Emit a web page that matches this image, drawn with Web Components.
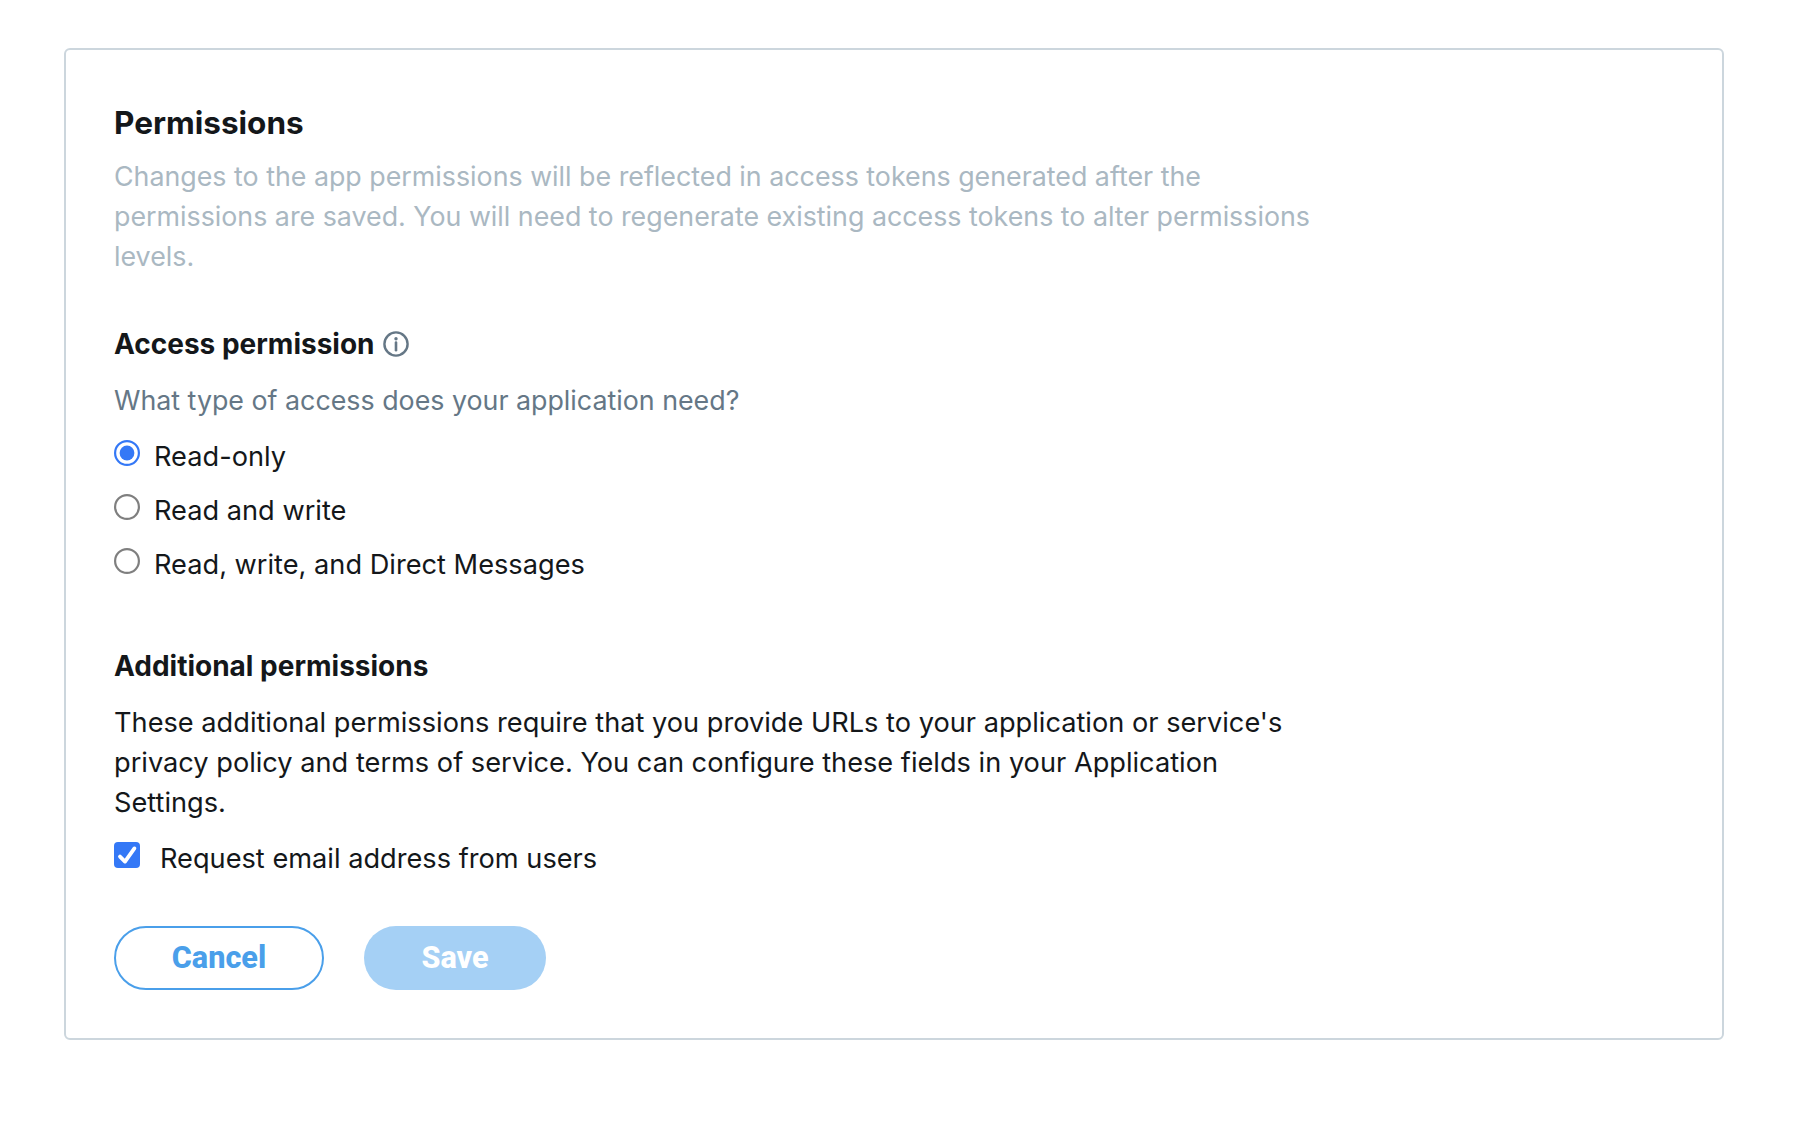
<!DOCTYPE html>
<html lang="en">
<head>
<meta charset="utf-8">
<title>Permissions</title>
<style>
  html, body { margin: 0; background: #fff; }
  body { font-family: Inter, "Liberation Sans", sans-serif; color: #14171a; }
</style>
</head>
<body>
<perm-page>
  <perm-card>
    <perm-heading slot="title" level="1">Permissions</perm-heading>
    <perm-text tone="muted" style="margin-top:13px">Changes to the app permissions will be reflected in access tokens generated after the permissions are saved. You will need to regenerate existing access tokens to alter permissions levels.</perm-text>

    <perm-heading level="2" info style="margin-top:48px">Access permission</perm-heading>
    <perm-text tone="grey" style="margin-top:16px">What type of access does your application need?</perm-text>
    <perm-radio checked style="margin-top:17px">Read-only</perm-radio>
    <perm-radio style="margin-top:14px">Read and write</perm-radio>
    <perm-radio style="margin-top:14px">Read, write, and Direct Messages</perm-radio>

    <perm-heading level="2" style="margin-top:61px">Additional permissions</perm-heading>
    <perm-text size="large" style="margin-top:17px">These additional permissions require that you provide URLs to your application or service's privacy policy and terms of service. You can configure these fields in your Application Settings.</perm-text>
    <perm-check checked style="margin-top:16px">Request email address from users</perm-check>

    <perm-actions>
      <perm-button variant="outline">Cancel</perm-button>
      <perm-button variant="disabled">Save</perm-button>
    </perm-actions>
  </perm-card>
</perm-page>

<script>
/** Small helper: shadow root from a markup string */
function shadow(el, html) {
    el.attachShadow({ mode: "open" }).innerHTML = html;
}

class PermPage extends HTMLElement {
    constructor() {
        super();
        shadow(this, `<style>
            :host { display: block; padding: 48px 74px 102px 64px; }
        </style><slot></slot>`);
    }
}

class PermCard extends HTMLElement {
    constructor() {
        super();
        shadow(this, `<style>
            :host {
                display: block;
                box-sizing: border-box;
                border: 2px solid #ccd6dd;
                border-radius: 6px;
                padding: 53px 48px 48px;
                background: #fff;
            }
            .body { max-width: 1200px; }
        </style>
        <div class="body"><slot name="title"></slot><slot></slot></div>`);
    }
}

class PermHeading extends HTMLElement {
    constructor() {
        super();
        const info = this.hasAttribute("info") ? `
            <svg viewBox="0 0 26 26" width="26" height="26" fill="none" stroke="#657786">
                <circle cx="13" cy="13" r="11.6" stroke-width="2.4"/>
                <path d="M13 11.6v7.6" stroke-width="2.6" stroke-linecap="round"/>
                <circle cx="13" cy="7.8" r="1.7" fill="#657786" stroke="none"/>
            </svg>` : "";
        shadow(this, `<style>
            :host { display: flex; align-items: center; gap: 8px; font-weight: 700; color: #14171a; line-height: 40px; }
            :host([level="1"]) { font-size: 31.5px; }
            :host([level="2"]) { font-size: 28px; }
        </style><slot></slot>${info}`);
    }
}

class PermText extends HTMLElement {
    constructor() {
        super();
        shadow(this, `<style>
            :host { display: block; font-size: 26.8px; line-height: 40px; color: #14171a; }
            :host([size="large"]) { font-size: 27.2px; }
            :host([tone="muted"]) { color: #aab8c2; }
            :host([tone="grey"]) { color: #657786; }
        </style><slot></slot>`);
    }
}

class PermRadio extends HTMLElement {
    constructor() {
        super();
        const on = this.hasAttribute("checked");
        shadow(this, `<style>
            :host { display: flex; align-items: center; gap: 14px; font-size: 27.2px; line-height: 40px; color: #14171a; }
            svg { flex: none; margin-top: -9px; }
        </style>
        <svg viewBox="0 0 26 26" width="26" height="26" fill="none">
            <circle cx="13" cy="13" r="11.9" stroke="${on ? "#3478f6" : "#7f7f7f"}" stroke-width="2.2" fill="#fff"/>
            ${on ? '<circle cx="13" cy="13" r="7.4" fill="#3478f6"/>' : ""}
        </svg><slot></slot>`);
    }
}

class PermCheck extends HTMLElement {
    constructor() {
        super();
        shadow(this, `<style>
            :host { display: flex; align-items: center; gap: 20px; font-size: 27.2px; line-height: 40px; color: #14171a; }
            svg { flex: none; margin-top: -8px; }
        </style>
        <svg viewBox="0 0 26 26" width="26" height="26">
            <rect width="26" height="26" rx="4" fill="#3478f6"/>
            <path d="M6 14.6l5 5L20.4 6.4" fill="none" stroke="#fff" stroke-width="3.8" stroke-linecap="round" stroke-linejoin="round"/>
        </svg><slot></slot>`);
    }
}

class PermActions extends HTMLElement {
    constructor() {
        super();
        shadow(this, `<style>
            :host { display: flex; gap: 40px; margin-top: 47px; }
        </style><slot></slot>`);
    }
}

class PermButton extends HTMLElement {
    constructor() {
        super();
        shadow(this, `<style>
            :host {
                display: inline-flex; align-items: center; justify-content: center;
                box-sizing: border-box; height: 64px; border-radius: 32px; padding-bottom: 2px;
                font-family: Roboto, "Liberation Sans", sans-serif; font-weight: 800; font-size: 30.6px;
                border: 2px solid transparent;
            }
            :host([variant="outline"]) { width: 210px; border-color: #4a9fea; color: #4a9fea; background: #fff; }
            :host([variant="disabled"]) { width: 182px; background: #a5d0f5; color: #fff; }
        </style><slot></slot>`);
    }
}

customElements.define("perm-page", PermPage);
customElements.define("perm-card", PermCard);
customElements.define("perm-heading", PermHeading);
customElements.define("perm-text", PermText);
customElements.define("perm-radio", PermRadio);
customElements.define("perm-check", PermCheck);
customElements.define("perm-actions", PermActions);
customElements.define("perm-button", PermButton);
</script>
</body>
</html>
